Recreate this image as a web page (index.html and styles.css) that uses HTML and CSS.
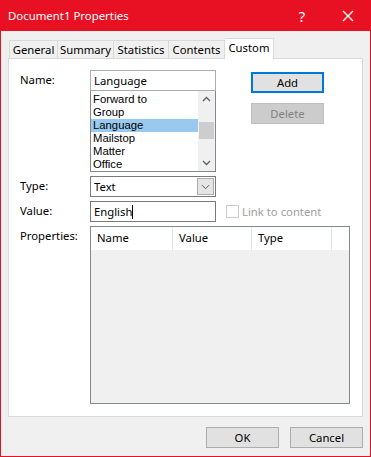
FILE: index.html
```html
<!DOCTYPE html>
<html lang="en">
<head>
    <meta charset="UTF-8">
    <title>Document1 Properties</title>
    <link rel="stylesheet" href="styles.css">
</head>
<body>
    <div class="window">
        <div class="titlebar">
            <span class="title">Document1 Properties</span>
            <span class="help">?</span>
            <span class="close">
                <svg width="12" height="12" viewBox="0 0 12 12"><path d="M1 1 L11 11 M11 1 L1 11" stroke="#fff" stroke-width="1.3"/></svg>
            </span>
        </div>
        <div class="content">
            <div class="tabs">
                <div class="tab t-general">General</div>
                <div class="tab t-summary">Summary</div>
                <div class="tab t-stats">Statistics</div>
                <div class="tab t-contents">Contents</div>
                <div class="tab active">Custom</div>
            </div>
            <div class="panel">
                <div class="row name-row">
                    <label class="lbl">Name:</label>
                    <div class="combo">
                        <div class="field">Language</div>
                        <div class="listbox">
                            <div class="items">
                                <div class="item">Forward to</div>
                                <div class="item">Group</div>
                                <div class="item selected">Language</div>
                                <div class="item">Mailstop</div>
                                <div class="item">Matter</div>
                                <div class="item">Office</div>
                            </div>
                            <div class="scrollbar">
                                <svg class="arrow" width="17" height="17" viewBox="0 0 17 17"><path d="M5 10 L8.5 6.5 L12 10" fill="none" stroke="#606060" stroke-width="1.3"/></svg>
                                <div class="track"><div class="thumb"></div></div>
                                <svg class="arrow" width="17" height="17" viewBox="0 0 17 17"><path d="M5 7 L8.5 10.5 L12 7" fill="none" stroke="#606060" stroke-width="1.3"/></svg>
                            </div>
                        </div>
                    </div>
                    <div class="side-buttons">
                        <button class="btn default">Add</button>
                        <button class="btn disabled">Delete</button>
                    </div>
                </div>
                <div class="row">
                    <label class="lbl">Type:</label>
                    <div class="field select">
                        <span>Text</span>
                        <span class="drop">
                            <svg width="17" height="17" viewBox="0 0 17 17"><path d="M4.5 7 L8.5 11 L12.5 7" fill="none" stroke="#444" stroke-width="1"/></svg>
                        </span>
                    </div>
                </div>
                <div class="row">
                    <label class="lbl">Value:</label>
                    <div class="field">English<span class="caret"></span></div>
                    <div class="link">
                        <span class="checkbox"></span>
                        <span>Link to content</span>
                    </div>
                </div>
                <div class="row props-row">
                    <label class="lbl">Properties:</label>
                    <div class="listview">
                        <div class="header">
                            <div class="col c1">Name</div>
                            <div class="col c2">Value</div>
                            <div class="col c3">Type</div>
                            <div class="col c4"></div>
                        </div>
                    </div>
                </div>
            </div>
            <div class="footer">
                <button class="btn">OK</button>
                <button class="btn">Cancel</button>
            </div>
        </div>
    </div>
</body>
</html>
```

FILE: styles.css
```css
* {
    box-sizing: border-box;
}

body {
    margin: 0;
    font-family: "Noto Sans", "Open Sans", sans-serif;
    font-size: 11.3px;
    color: #000;
    background: #fff;
}

.window {
    width: 371px;
    height: 457px;
    background: #f0f0f0;
    border: 1px solid #e81123;
    border-top: none;
    display: flex;
    flex-direction: column;
}

.titlebar {
    height: 31px;
    background: #e81123;
    color: #fff;
    display: flex;
    align-items: center;
    padding-left: 8px;
    margin: 0 -1px;
}

.title {
    flex: 1;
    font-size: 11.4px;
}

.help {
    width: 46px;
    text-align: center;
    font-size: 15px;
}

.close {
    width: 46px;
    display: flex;
    justify-content: center;
}

.content {
    padding: 7px 7px 0 7px;
}

.tabs {
    display: flex;
    height: 20px;
    padding-left: 1px;
    align-items: flex-end;
    position: relative;
    z-index: 1;
}

.tab {
    height: 18px;
    border: 1px solid #d9d9d9;
    border-bottom: none;
    border-left: none;
    background: #f0f0f0;
    line-height: 17px;
    text-align: center;
}

.t-general {
    width: 49px;
    border-left: 1px solid #d9d9d9;
}

.t-summary {
    width: 56px;
}

.t-stats {
    width: 55px;
}

.t-contents {
    width: 56px;
}

.tab.active {
    width: 49px;
    height: 21px;
    margin-bottom: -1px;
    background: #fff;
    line-height: 17px;
}

.panel {
    background: #fff;
    border: 1px solid #d9d9d9;
    padding: 11px 12px 13px 11px;
    height: 359px;
}

.row {
    display: flex;
    margin-bottom: 4px;
}

.lbl {
    width: 70px;
    padding-top: 2px;
}

.field {
    width: 126px;
    height: 21px;
    border: 1px solid #7a7a7a;
    padding: 1px 3px;
    line-height: 17px;
    background: #fff;
}

.combo {
    width: 126px;
}

.combo .field {
    border-color: #abadb3;
}

.listbox {
    height: 81px;
    border: 1px solid #828790;
    border-top: none;
    display: flex;
}

.items {
    flex: 1;
    padding-top: 2px;
}

.item {
    height: 13px;
    line-height: 13px;
    padding-left: 2px;
    font-family: "Liberation Sans", Arial, sans-serif;
    font-size: 11.3px;
}

.item.selected {
    background: #99c9ef;
}

.scrollbar {
    width: 17px;
    background: #f0f0f0;
    display: flex;
    flex-direction: column;
}

.track {
    flex: 1;
    padding-top: 14px;
}

.thumb {
    height: 17px;
    margin: 0 1px;
    background: #cdcdcd;
}

.side-buttons {
    margin-left: 35px;
    padding-top: 2px;
    display: flex;
    flex-direction: column;
    gap: 10px;
}

.btn {
    width: 73px;
    height: 21px;
    font-family: inherit;
    font-size: 11.3px;
    background: #e1e1e1;
    border: 1px solid #adadad;
    padding: 0;
    color: #000;
}

.btn.default {
    border: 2px solid #0078d7;
}

.btn.disabled {
    background: #cccccc;
    border-color: #bfbfbf;
    color: #838383;
}

.select {
    display: flex;
    justify-content: space-between;
    padding-right: 1px;
}

.drop {
    width: 17px;
    height: 17px;
    background: #e5e5e5;
    border: 1px solid #acacac;
    display: flex;
    align-items: center;
    justify-content: center;
}

.caret {
    display: inline-block;
    width: 1px;
    height: 14px;
    background: #000;
    vertical-align: -3px;
}

.link {
    display: flex;
    align-items: center;
    gap: 3px;
    margin-left: 10px;
    color: #a0a0a0;
}

.checkbox {
    width: 13px;
    height: 13px;
    border: 1px solid #cccccc;
    background: #fff;
}

.listview {
    width: 260px;
    height: 178px;
    border: 1px solid #828790;
    background: #f0f0f0;
}

.header {
    display: flex;
    height: 23px;
    background: #fff;
}

.col {
    border-right: 1px solid #e5e5e5;
    padding-left: 6px;
    line-height: 22px;
}

.c1 {
    width: 82px;
}

.c2 {
    width: 79px;
}

.c3 {
    width: 80px;
}

.c4 {
    flex: 1;
    border-right: none;
}

.footer {
    display: flex;
    justify-content: flex-end;
    gap: 11px;
    margin-top: 10px;
}
```
